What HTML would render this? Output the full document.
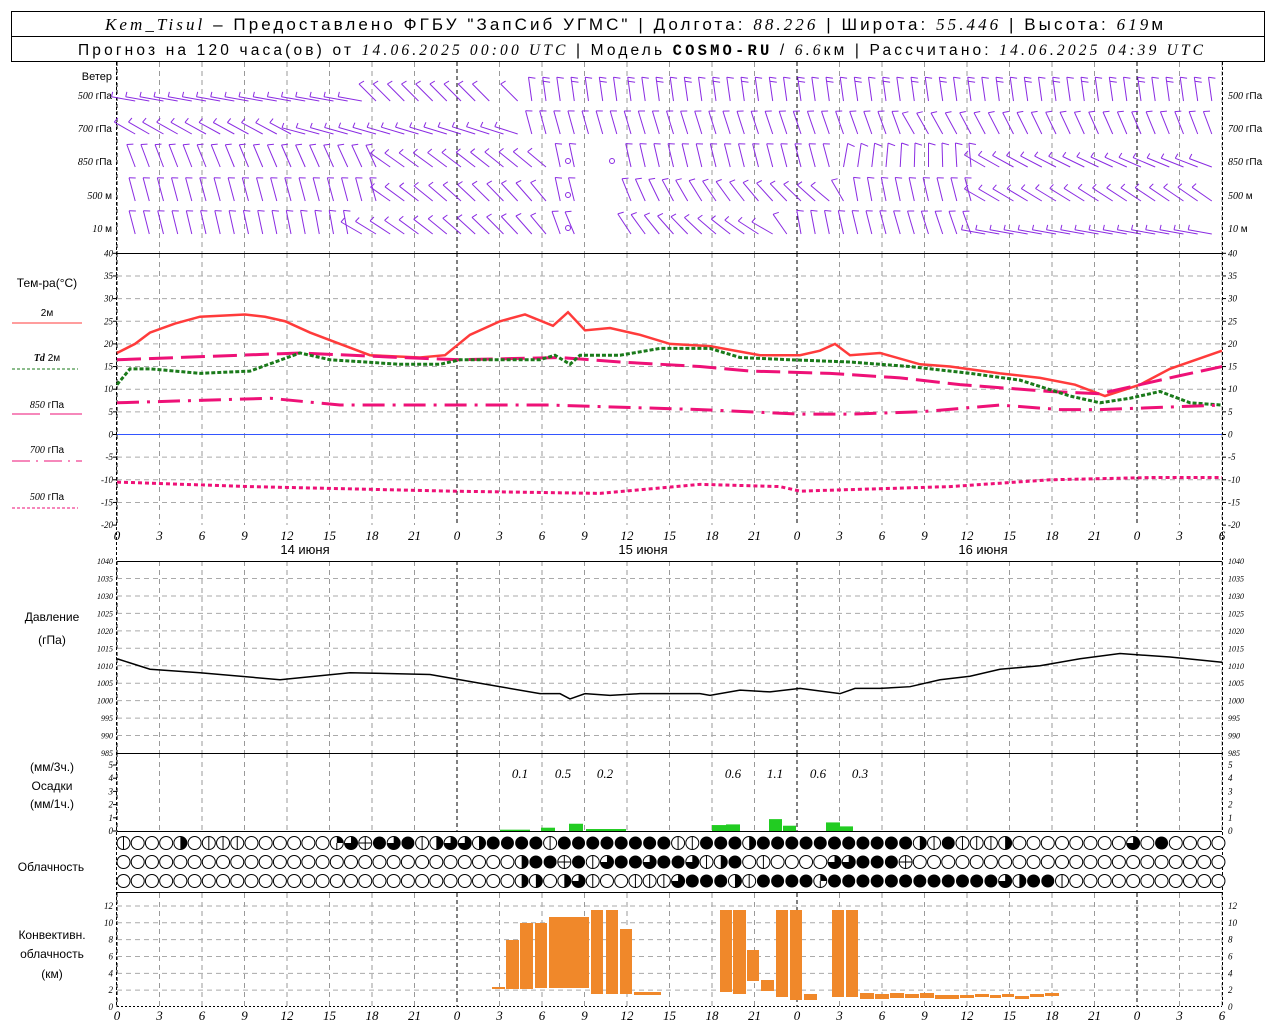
<!DOCTYPE html>
<html><head><meta charset="utf-8"><style>
html,body{margin:0;padding:0;background:#fff;width:1280px;height:1024px;overflow:hidden}
svg{display:block;font-family:"Liberation Sans","DejaVu Sans",sans-serif}
.it{font-family:"Liberation Serif",serif;font-style:italic}
</style></head><body>
<svg id="s" width="1280" height="1024" viewBox="0 0 1280 1024" xmlns="http://www.w3.org/2000/svg">
<rect x="11.5" y="11.5" width="1253" height="50" fill="none" stroke="#000"/>
<line x1="11" y1="36.5" x2="1265" y2="36.5" stroke="#000"/>
<text x="105" y="30" font-size="17" textLength="1058" lengthAdjust="spacing"><tspan class="it">Kem_Tisul</tspan> – Предоставлено ФГБУ "ЗапСиб УГМС" | Долгота: <tspan class="it">88.226</tspan> | Широта: <tspan class="it">55.446</tspan> | Высота: <tspan class="it">619</tspan>м</text>
<text x="78" y="55" font-size="15.5" textLength="1125" lengthAdjust="spacing">Прогноз на 120 часа(ов) от <tspan class="it">14.06.2025 00:00 UTC</tspan>  | Модель <tspan font-family="Liberation Mono" font-weight="bold">COSMO-RU</tspan> / <tspan class="it">6.6</tspan>км | Рассчитано: <tspan class="it">14.06.2025 04:39 UTC</tspan></text>
<g id="g"></g>
</svg>
<script>
var S=document.getElementById('g'),o='';
function X(h){return 117+h*340/24}
function L(a,b,c,d,col,w,da){o+='<line x1="'+a+'" y1="'+b+'" x2="'+c+'" y2="'+d+'" stroke="'+(col||'#000')+'" stroke-width="'+(w||1)+'"'+(da?' stroke-dasharray="'+da+'"':'')+'/>';}
function T(x,y,t,sz,anc,cls,col){o+='<text x="'+x+'" y="'+y+'" font-size="'+sz+'" text-anchor="'+(anc||'start')+'"'+(cls?' class="'+cls+'"':'')+(col?' fill="'+col+'"':'')+'>'+t+'</text>';}
function P(pts,col,w,da){o+='<polyline fill="none" points="'+pts.map(function(p){return p[0]+','+p[1]}).join(' ')+'" stroke="'+col+'" stroke-width="'+w+'"'+(da?' stroke-dasharray="'+da+'"':'')+'/>';}
var secs=[[62,253],[253,525],[561,753],[753,831],[893,1007]];
secs.forEach(function(s){for(var h=0;h<=78;h+=3){var day=h%24==0;L(X(h),s[0],X(h),s[1],day?'#000':'#999',1,day?'4,3':'5,4');}});
function ty(t){return 434.5-t*4.53}
for(var t=-20;t<=40;t+=5){var y=ty(t);if(t!=40&&t!=-20&&t!=0)L(117,y,1222,y,'#aaa',1,'5,4');T(113,y+3,t,9,'end','it');T(1228,y+3,t,9,'start','it');L(113,y,117,y);L(1222,y,1226,y);}
L(117,ty(0),1222,ty(0),'#3355ff',1);
L(117,253.5,1222,253.5);
function py(p){return 753-(p-985)*3.49}
for(var p=985;p<=1040;p+=5){var y=py(p);if(p>985&&p<1040)L(117,y,1222,y,'#aaa',1,'5,4');T(113,y+3,p,8,'end','it');T(1228,y+3,p,8,'start','it');}
L(117,561.5,1222,561.5,'#000');L(117,753.5,1222,753.5,'#000');
function ry(v){return 831-v*13.2}
for(var v=0;v<=5;v++){T(113,ry(v)+3,v,9,'end','it');T(1228,ry(v)+3,v,9,'start','it');L(113,ry(v),117,ry(v));}
L(117,831.5,1222,831.5);
function cy(k){return 1007-k*8.42}
for(var k=0;k<=12;k+=2){var y=cy(k);if(k>0)L(117,y,1222,y,'#aaa',1,'5,4');T(113,y+3,k,9,'end','it');T(1228,y+3,k,9,'start','it');}
L(117,892.5,1222,892.5);L(117,1006.5,1222,1006.5,'#000',1,'2,2');
L(116.5,62,116.5,1007,'#000',1,'3,2');L(1222.5,62,1222.5,1007,'#000',1,'3,2');
for(var h=0;h<=78;h+=3){var lab=h%24;T(X(h),540,lab,13,'middle','it');T(X(h),1020,lab,13,'middle','it');}
T(305,554,'14 июня',13,'middle');T(643,554,'15 июня',13,'middle');T(983,554,'16 июня',13,'middle');
T(112,80,'Ветер',11,'end');
var wl=[['500','гПа',95],['700','гПа',128],['850','гПа',161],['500','м',195],['10','м',228]];
wl.forEach(function(w){T(112,w[2]+4,'<tspan class="it">'+w[0]+'</tspan> '+w[1],10,'end');T(1228,w[2]+4,'<tspan class="it">'+w[0]+'</tspan> '+w[1],10,'start');});
T(47,287,'Тем-ра(°С)',12,'middle');
T(47,316,'2м',10,'middle');L(12,323,82,323,'#ff3b3b',1);
T(47,361,'<tspan class="it" font-weight="bold">Td</tspan>  2м',10,'middle');L(12,369,78,369,'#1a7a1a',1,'3,2');
T(47,408,'<tspan class="it">850</tspan> гПа',10,'middle');L(12,414,40,414,'#ee1177',1);L(50,414,82,414,'#ee1177',1);
T(47,453,'<tspan class="it">700</tspan> гПа',10,'middle');L(12,461,82,461,'#ee1177',1,'18,6,2,6');
T(47,500,'<tspan class="it">500</tspan> гПа',10,'middle');L(12,508,78,508,'#ee1177',1,'3,2');
T(52,621,'Давление',12,'middle');T(52,644,'(гПа)',12,'middle');
T(52,771,'(мм/3ч.)',12,'middle');T(52,790,'Осадки',12,'middle');T(52,808,'(мм/1ч.)',12,'middle');
T(51,871,'Облачность',12,'middle');
T(52,939,'Конвективн.',12,'middle');T(52,958,'облачность',12,'middle');T(52,978,'(км)',12,'middle');
function tc(a){return a.map(function(q){return [q[0],ty(q[1])]})}
P(tc([[117,18],[135,20],[150,22.5],[175,24.5],[200,26],[245,26.5],[265,26],[285,25],[310,22.5],[340,20],[370,17.5],[420,17],[445,17.5],[470,22],[500,25],[525,26.5],[553,24],[568,27],[585,23],[610,23.5],[640,22],[670,20],[710,19.5],[760,17.5],[800,17.5],[820,18.5],[835,20],[850,17.5],[880,18],[920,15.5],[950,15],[1000,13.5],[1040,12.5],[1075,11],[1105,8.5],[1140,11],[1170,14.5],[1222,18.5]]),'#ff3b3b',2.5);
P(tc([[117,16.5],[240,17.5],[300,18],[400,17],[460,16.5],[560,17],[620,16],[700,15],[750,14],[830,13.5],[900,12.5],[960,11],[1050,9.5],[1100,9],[1140,11],[1180,13],[1222,15]]),'#ee1177',3,'24,8');
P(tc([[117,11],[130,14.5],[150,14.5],[200,13.5],[250,14],[300,18],[330,16.5],[400,15.5],[440,15.5],[460,16.5],[540,16.5],[555,17.5],[570,15.5],[580,17.5],[620,17.5],[660,19],[710,19],[740,17],[790,16.5],[850,16],[910,15],[970,13.5],[1020,12],[1070,8.5],[1100,7],[1130,8],[1160,9.5],[1190,7],[1222,6.5]]),'#1a7a1a',3,'4,2');
P(tc([[117,7],[270,8],[340,6.5],[450,6.5],[550,6.5],[700,5.5],[800,4.5],[850,4.5],[920,5],[1000,6.5],[1060,5.5],[1100,5.5],[1222,6.5]]),'#ee1177',3,'22,8,3,8');
P(tc([[117,-10.5],[250,-11.5],[450,-12.5],[600,-13],[700,-11],[780,-11.5],[800,-12.5],[950,-11.5],[1050,-10],[1150,-9.5],[1222,-9.5]]),'#ee1177',3,'4,3');
var pr=[[117,1012],[150,1009],[200,1008],[280,1006],[350,1008],[430,1007.5],[480,1005],[540,1002],[560,1002],[570,1000.5],[585,1002],[610,1001.5],[640,1002],[700,1002],[710,1001.5],[740,1003],[770,1002.5],[800,1003.5],[840,1002],[855,1003.5],[880,1003.5],[910,1004],[940,1006],[970,1007],[1000,1009],[1040,1010],[1080,1012],[1120,1013.5],[1170,1012.5],[1222,1011]];
P(pr.map(function(q){return [q[0],py(q[1])]}),'#000',1.5);
[[500,530,0.1],[541,555,0.25],[569,583,0.55],[586,626,0.15],[712,726,0.45],[726,740,0.5],[769,782,0.9],[783,796,0.4],[826,840,0.65],[840,853,0.35]].forEach(function(b){var h=b[2]*13.2;o+='<rect x="'+b[0]+'" y="'+(831-h)+'" width="'+(b[1]-b[0])+'" height="'+h+'" fill="#22cc22"/>';});
[['0.1',520],['0.5',563],['0.2',605],['0.6',733],['1.1',775],['0.6',818],['0.3',860]].forEach(function(a){T(a[1],778,a[0],13,'middle','it');});
var rows=['V000H0VVV000000QTXFTFVHTT'+'HFFFFVFFFFFFFFVVFFFHFFFFFF'+'FFFFFHVFVVVH00000000T0F0000',
'0000000000000000000000000'+'000HFFXFVTFFTFFTVHF0V0000T'+'TFFFX0000000000000000000000',
'0000000000000000000000000'+'000HH0HTV00VVVTFFFHVFFFFQF'+'FFFFFFFFFFFTHFFV00000000000'];
var ry3=[843,862,881];
rows.forEach(function(r,ri){for(var i=0;i<78;i++){var cx=123.5+i*14.22,cyy=ry3[ri],c=r[i]||'0',rr=6.5;
if(c=='F')o+='<circle cx="'+cx+'" cy="'+cyy+'" r="'+rr+'" fill="#000"/>';
else{o+='<circle cx="'+cx+'" cy="'+cyy+'" r="'+rr+'" fill="#fff" stroke="#000" stroke-width="1"/>';
if(c=='V')L(cx,cyy-rr,cx,cyy+rr);
if(c=='H')o+='<path d="M'+cx+','+(cyy-rr)+' A'+rr+','+rr+' 0 0 1 '+cx+','+(cyy+rr)+'Z" fill="#000"/>';
if(c=='T')o+='<path d="M'+cx+','+cyy+' L'+cx+','+(cyy-rr)+' A'+rr+','+rr+' 0 1 1 '+(cx-rr)+','+cyy+'Z" fill="#000"/>';
if(c=='Q')o+='<path d="M'+cx+','+cyy+' L'+cx+','+(cyy-rr)+' A'+rr+','+rr+' 0 0 1 '+(cx+rr)+','+cyy+'Z" fill="#000"/>'+'<line x1="'+cx+'" y1="'+cyy+'" x2="'+cx+'" y2="'+(cyy+rr)+'" stroke="#000"/>';
if(c=='X'){L(cx,cyy-rr,cx,cyy+rr);L(cx-rr,cyy,cx+rr,cyy);}}}});
[[492,506,987,989],[506,520,940,989],[520,534,923,989],[535,548,923,988],[549,590,917,988],[591,604,910,994],[606,619,910,994],[620,633,929,994],[634,662,992,995],[720,733,910,992],[733,747,910,994],[747,760,950,981],[761,775,980,991],[776,789,910,997],[790,803,910,1000],[804,818,994,1000],[832,845,910,997],[846,859,910,997],[860,875,993,999],[875,890,994,999],[890,905,993,998],[905,920,994,998],[920,935,993,998],[935,960,995,999],[960,975,995,998],[975,990,994,997],[990,1002,995,998],[1002,1015,994,997],[1015,1030,996,999],[1030,1045,994,997],[1045,1060,993,996]].forEach(function(b){o+='<rect x="'+b[0]+'" y="'+b[2]+'" width="'+(b[1]-b[0]-1)+'" height="'+(b[3]-b[2])+'" fill="#f0882a"/>';});
function ang(row,h){var k=[[[0,80],[17,80],[18,45],[28,45],[29,8],[78,8]],[[0,60],[12,62],[13,75],[28,72],[29,15],[55,20],[56,30],[78,20]],[[0,20],[18,25],[19,55],[30,50],[31,12],[50,15],[51,-10],[60,5],[61,60],[78,70]],[[0,15],[18,15],[19,55],[30,40],[31,12],[50,50],[52,10],[60,15],[61,60],[78,55]],[[0,15],[16,10],[17,60],[30,40],[31,20],[46,60],[48,10],[60,20],[61,80],[78,80]]][row];
for(var i=0;i<k.length-1;i++){if(h>=k[i][0]&&h<=k[i+1][0]){var f=(h-k[i][0])/((k[i+1][0]-k[i][0])||1);return k[i][1]+(k[i+1][1]-k[i][1])*f;}}return 0;}
var wy=[95,128,161,195,228];
for(var r=0;r<5;r++)for(var h=1;h<78;h++){if(r>=2&&h>=33&&h<=35)continue;if(r==0&&h==27)continue;
var a=ang(r,h)*Math.PI/180,len=24,bx=X(h)+4,by=wy[r]+6,tx=bx-Math.sin(a)*len,tyy=by-Math.cos(a)*len;
L(bx.toFixed(1),by,tx.toFixed(1),tyy.toFixed(1),'#8a2be2',1);
L(tx.toFixed(1),tyy.toFixed(1),(tx+Math.cos(a)*7).toFixed(1),(tyy-Math.sin(a)*7+2).toFixed(1),'#8a2be2',1);
if(r==0&&h>28&&h%2==0){var sx=tx+Math.sin(a)*4,sy=tyy+Math.cos(a)*4;L(sx.toFixed(1),sy.toFixed(1),(sx+Math.cos(a)*7).toFixed(1),(sy-Math.sin(a)*7+2).toFixed(1),'#8a2be2',1);}}
[[568,161],[612,161],[568,195],[568,228]].forEach(function(c){o+='<circle cx="'+c[0]+'" cy="'+c[1]+'" r="2.5" fill="none" stroke="#8a2be2"/>';});
S.innerHTML=o;
</script>
</body></html>
